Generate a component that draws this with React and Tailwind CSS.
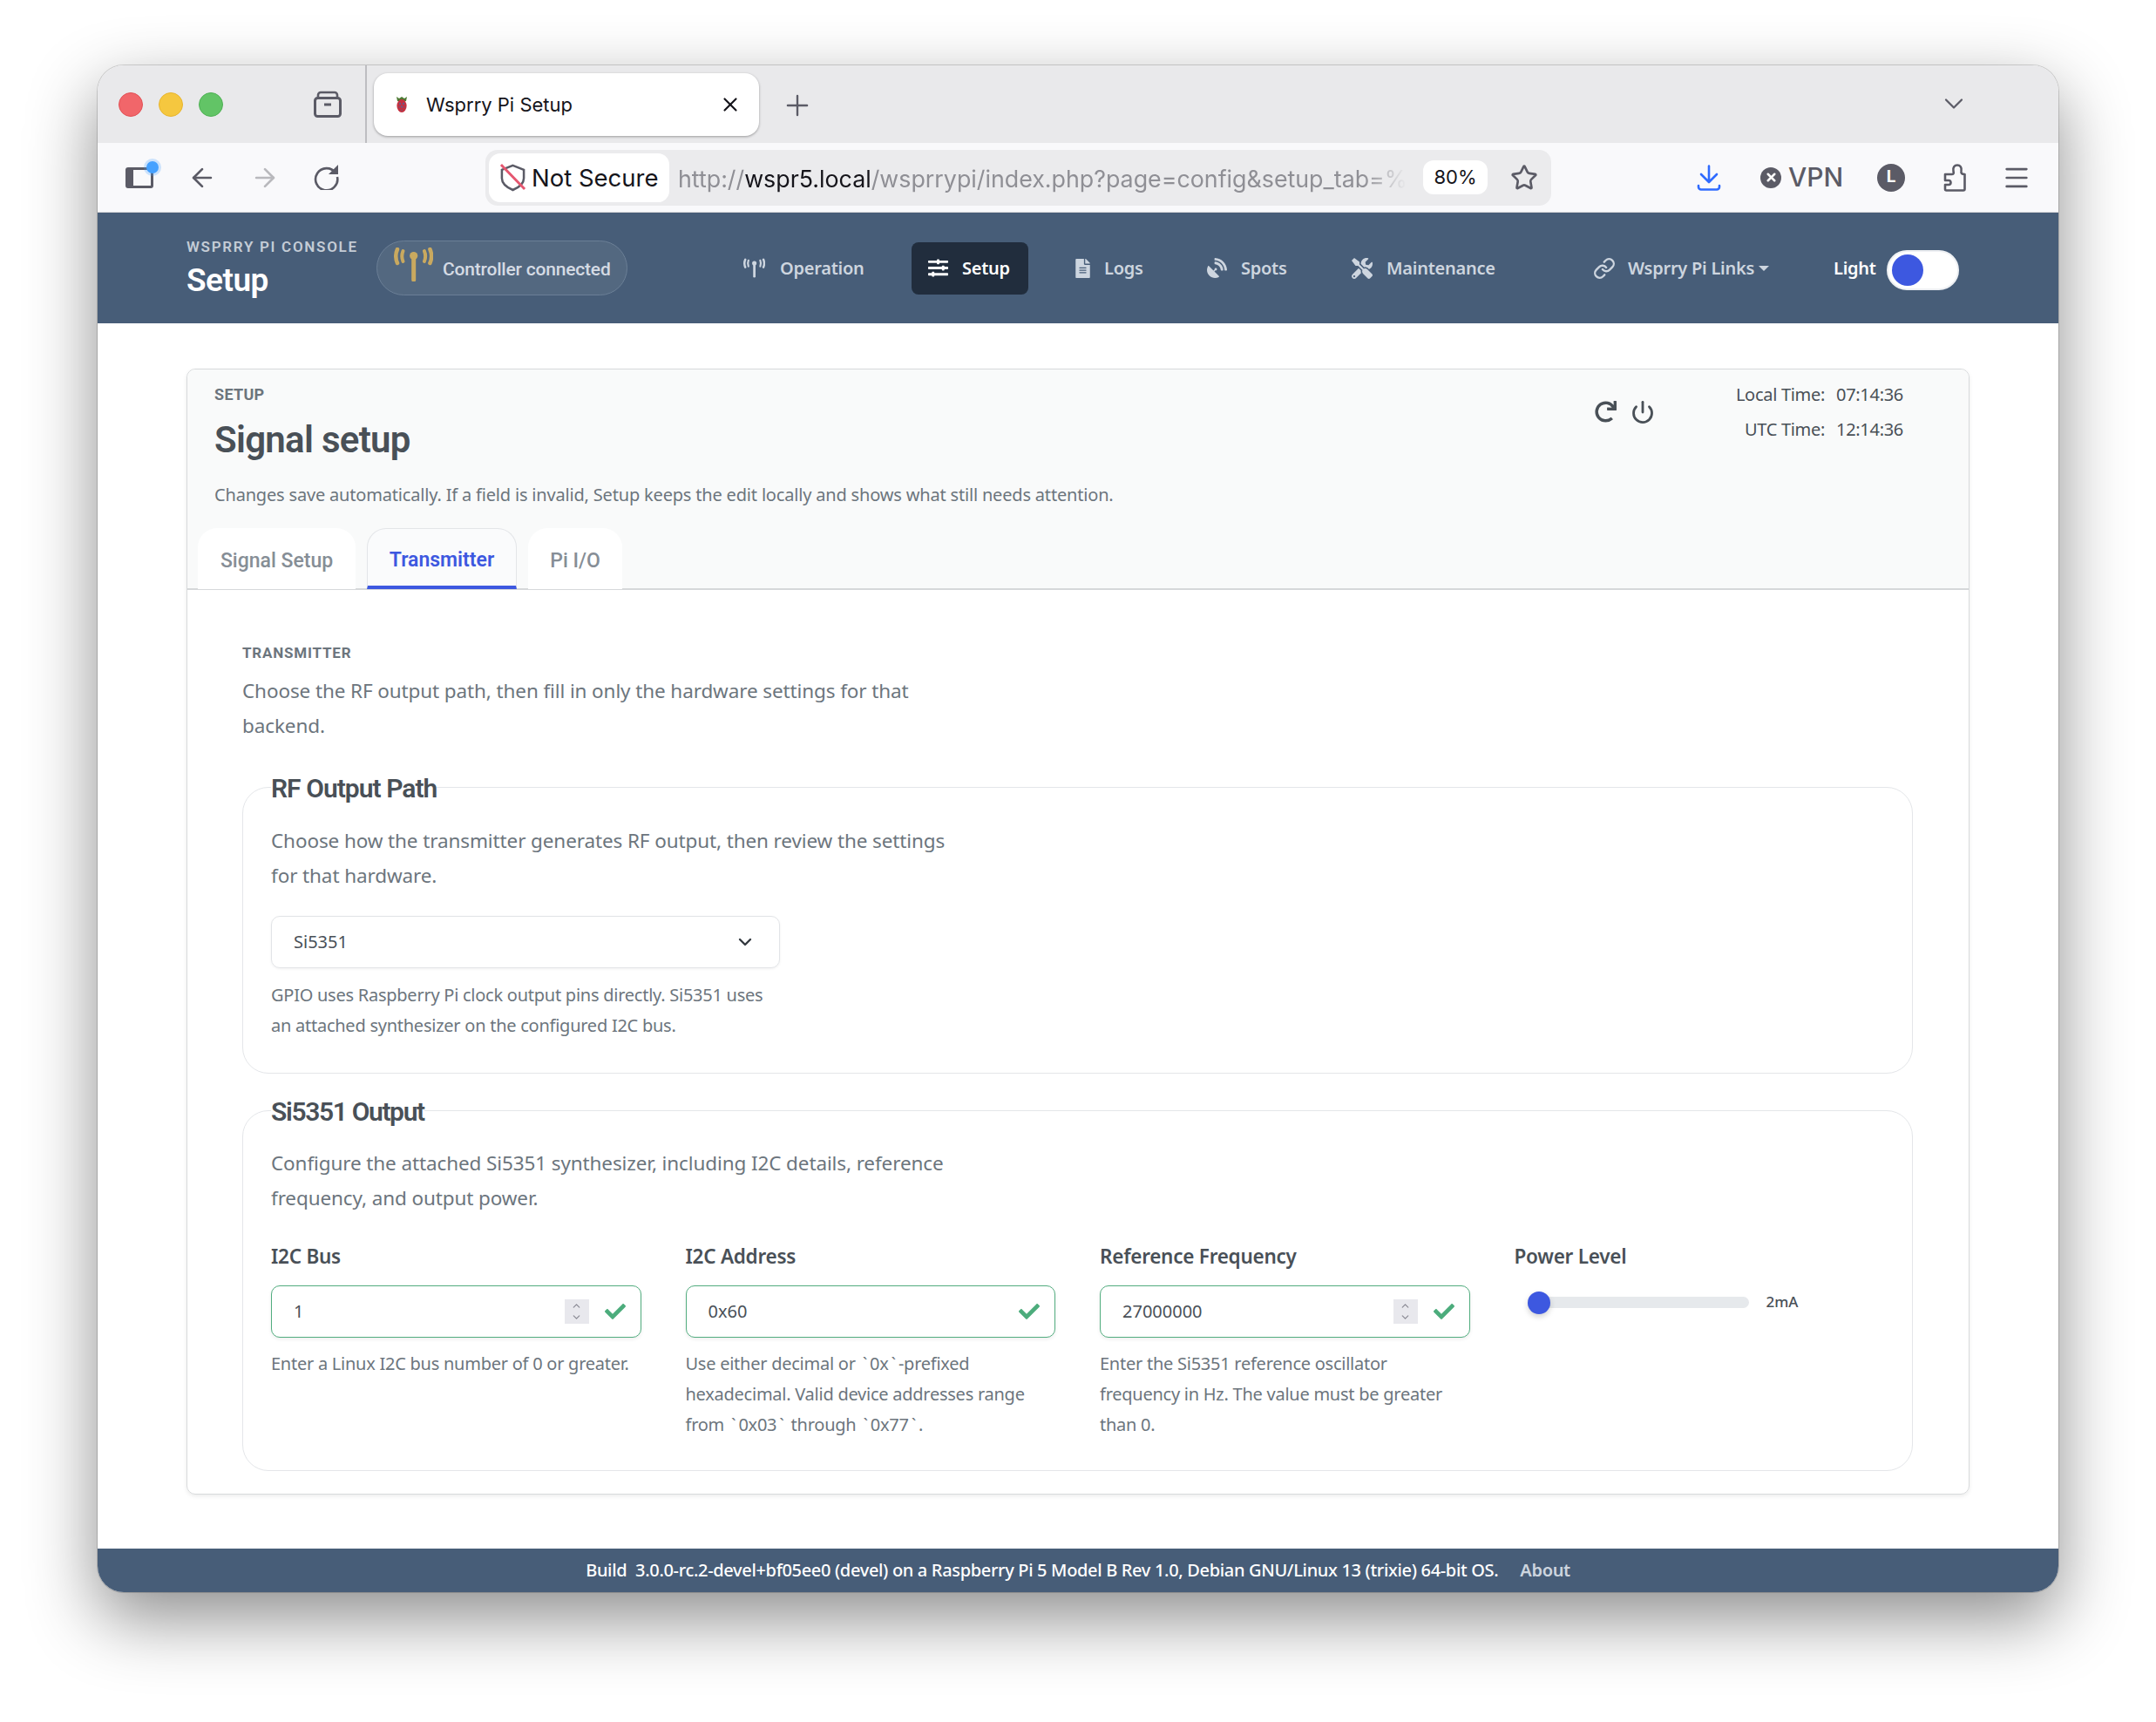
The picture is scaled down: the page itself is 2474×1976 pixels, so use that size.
import React from 'react';
import { ArrowLeft, ArrowRight, ChevronDown, ChevronUp, Link, Menu, Plus, Power, Star, X } from 'lucide-react';
import { FaCheck, FaFileAlt, FaRedo, FaSatelliteDish, FaSlidersH, FaTools } from 'react-icons/fa';

const heading = "font-['Roboto',sans-serif]";

const Antenna = ({ className }) => (
  <svg viewBox="0 0 45 39" className={className} fill="none" stroke="currentColor" strokeLinecap="round">
    <circle cx="22.7" cy="9.5" r="4.6" fill="currentColor" stroke="none" />
    <path d="M22.7 10V37" strokeWidth="5" />
    <path d="M4 2Q.5 10 4 18" strokeWidth="4.5" />
    <path d="M10.5 4Q8 10 10.5 16" strokeWidth="4" />
    <path d="M41.4 2Q44.9 10 41.4 18" strokeWidth="4.5" />
    <path d="M34.9 4Q37.4 10 34.9 16" strokeWidth="4" />
  </svg>
);

const Lights = () => (
  <div className="flex gap-[18px] ml-[24px]">
    <span className="w-[28px] h-[28px] rounded-full bg-[#f1666a] border border-[#e25055]" />
    <span className="w-[28px] h-[28px] rounded-full bg-[#f5c73f] border border-[#e8b52e]" />
    <span className="w-[28px] h-[28px] rounded-full bg-[#62c466] border border-[#4fb054]" />
  </div>
);

const Raspberry = () => (
  <svg viewBox="0 0 14 20" className="w-[14px] h-[20px]">
    <path d="M1 1l3 2 3-2 3 2 3-2-1 5H2z" fill="#4d7a33" />
    <ellipse cx="7" cy="11.5" rx="5.6" ry="7.5" fill="#c5303f" />
    <circle cx="5" cy="9" r="1.2" fill="#6d5a86" />
    <circle cx="9" cy="9" r="1.2" fill="#6d5a86" />
    <circle cx="7" cy="12.5" r="1.2" fill="#6d5a86" />
    <circle cx="4" cy="13" r="1" fill="#8d4a66" />
    <circle cx="10" cy="13" r="1" fill="#8d4a66" />
    <circle cx="7" cy="16.5" r="1" fill="#8d4a66" />
  </svg>
);

const TabStrip = () => (
  <div className="h-[89px] bg-[#e9e9eb] flex shrink-0 items-stretch">
    <div className="w-[309px] flex items-center relative">
      <Lights />
      <svg viewBox="0 0 32 32" className="w-[32px] h-[32px] ml-[104px] mt-[-2px] text-[#5b5b66]" fill="none" stroke="currentColor" strokeWidth="3">
        <rect x="1.5" y="9.5" width="29" height="21" rx="3" />
        <path d="M5 9.5V6a3 3 0 0 1 3-3h16a3 3 0 0 1 3 3v3.5" strokeWidth="2.6" />
        <path d="M12 17h8" />
      </svg>
      <span className="absolute right-0 top-0 bottom-0 w-[2px] bg-[#bdbdc1]" />
    </div>
    <div className="ml-[8px] mt-[9px] w-[442px] h-[72px] rounded-[16px] bg-white shadow-[0_1px_3px_rgba(0,0,0,0.35)] flex items-center pl-[25px] pr-[20px] font-['Inter',sans-serif]">
      <Raspberry />
      <span className="ml-[21px] text-[22px] text-[#15141a] flex-1">Wsprry Pi Setup</span>
      <X className="w-[26px] h-[26px] text-[#15141a]" strokeWidth={2} />
    </div>
    <Plus className="ml-[25px] self-center w-[38px] h-[38px] text-[#5b5b66] mt-[3px]" strokeWidth={1.5} />
    <ChevronDown className="ml-auto mr-[102px] self-center w-[36px] h-[36px] text-[#5b5b66] mt-[-2px]" strokeWidth={1.5} />
  </div>
);

const Toolbar = () => (
  <div className="h-[80px] bg-[#f9f9fb] border-b border-[#d8d8da] flex items-center shrink-0 font-['Inter',sans-serif] text-[#5b5b66]">
    <div className="relative ml-[32px] w-[32px] h-[24px] rounded-[3px] border-[3px] border-[#5b5b66] border-l-[9px]">
      <span className="absolute right-[-9px] top-[-10px] w-[14px] h-[14px] rounded-full bg-[#45a1ff] ring-[3px] ring-[#45a1ff]/25" />
    </div>
    <ArrowLeft className="ml-[39px] w-[34px] h-[34px]" strokeWidth={1.9} />
    <ArrowRight className="ml-[38px] w-[34px] h-[34px] text-[#b9b9bd]" strokeWidth={1.9} />
    <svg viewBox="0 0 30 30" className="ml-[38px] w-[30px] h-[30px] mt-[-1px]" fill="none" stroke="currentColor" strokeWidth="2.6">
      <path d="M26 10.5A12.6 12.6 0 1 0 28 15" />
      <path d="M29 1v11H18z" fill="currentColor" stroke="none" />
    </svg>
    <div className="ml-[168px] w-[1223px] h-[64px] rounded-[14px] bg-[#ebebed] flex items-center pl-[4px] pr-[12px]">
      <div className="w-[207px] h-[56px] rounded-[13px] bg-white flex items-center pl-[12px] text-[27.5px] text-[#15141a] shrink-0">
        <svg viewBox="0 0 32 34" className="w-[31px] h-[33px] mr-[6px] shrink-0" fill="none">
          <path d="M16 3L29 8v10c0 7-6 11-13 14C9 29 3 25 3 18V8z" stroke="#5b5b66" strokeWidth="2.6" />
          <path d="M2 2L30 31" stroke="#e5566f" strokeWidth="3" />
        </svg>
        <span className="mt-[2px]">Not Secure</span>
      </div>
      <div className="ml-[10px] mt-[3px] w-[836px] overflow-hidden whitespace-nowrap text-[26.8px] text-[#8f8f95] shrink-0 [mask-image:linear-gradient(to_right,black_94%,transparent)]">
        http://<span className="text-[#15141a]">wspr5.local</span>/wsprrypi/index.php?page=config&amp;setup_tab=%2
      </div>
      <span className="w-[74px] h-[39px] rounded-[12px] bg-white text-[22px] text-[#15141a] flex items-center justify-center ml-[19px] shrink-0">80%</span>
      <Star className="ml-[26px] w-[32px] h-[32px]" strokeWidth={2} />
    </div>
    <svg viewBox="0 0 28 30" className="ml-[167px] w-[28px] h-[30px] text-[#2f6bff]" fill="none" stroke="currentColor" strokeWidth="2.6" strokeLinecap="round" strokeLinejoin="round">
      <path d="M14 1.5V19M5 11l9 9 9-9M2 24v1.5a3 3 0 0 0 3 3h18a3 3 0 0 0 3-3V24" />
    </svg>
    <span className="ml-[45px] w-[24px] h-[24px] rounded-full bg-[#5b5b66] flex items-center justify-center text-white">
      <X className="w-[15px] h-[15px]" strokeWidth={4} />
    </span>
    <span className="ml-[8px] text-[30px] font-medium">VPN</span>
    <span className="ml-[39px] w-[32px] h-[32px] rounded-full bg-[#5b5b66] text-white text-[19px] font-bold flex items-center justify-center">L</span>
    <svg viewBox="0 0 26 32" className="ml-[44px] w-[26px] h-[32px]" fill="none" stroke="currentColor" strokeWidth="2.6" strokeLinejoin="round">
      <path d="M2 12H10C12 12 12 10 11.5 8.5C10.5 4 13 1.5 16 1.5C19 1.5 21.5 4 20.5 8.5C20 10.5 21 12 24.5 12V29A1.5 1.5 0 0 1 23 30.5H3.5A1.5 1.5 0 0 1 2 29V24H6A2.5 2.5 0 0 0 6 19H2z" />
    </svg>
    <Menu className="ml-[41px] w-[34px] h-[34px]" strokeWidth={1.9} />
  </div>
);

const NavItem = ({ icon, label, className }) => (
  <div className={`flex items-center shrink-0 text-[20px] font-semibold text-[#cdd5df] tracking-[-0.25px] whitespace-nowrap ${className}`}>
    {icon}
    <span>{label}</span>
  </div>
);

const AppNav = () => (
  <nav className="h-[127px] bg-[#475d78] flex items-center shrink-0 pl-[102px]">
    <div className="w-[194px] shrink-0">
      <div className={`${heading} text-[17px] font-semibold text-[#c4ccd6] tracking-[1.7px] leading-[24px] whitespace-nowrap`}>WSPRRY PI CONSOLE</div>
      <div className={`${heading} text-[37px] font-semibold text-white leading-[46px] mt-[4px] tracking-[-0.5px]`}>Setup</div>
    </div>
    <div className="ml-[24px] w-[288px] h-[63px] shrink-0 rounded-full bg-[#536880] border border-[#6b7f96] flex items-center pl-[19px]">
      <Antenna className="w-[45px] h-[39px] text-[#c9a95f] mt-[-8px]" />
      <span className={`${heading} ml-[11px] mt-[5px] text-[21px] font-medium text-[#d5dbe4] tracking-[-0.2px] whitespace-nowrap`}>Controller connected</span>
    </div>
    <NavItem className="ml-[133px] w-[193px]" icon={<Antenna className="w-[25px] h-[23px] mr-[17px]" />} label="Operation" />
    <div className="w-[134px] h-[60px] rounded-[8px] bg-[#212d3d] flex items-center shrink-0 pl-[19px] text-[20px] tracking-[-0.25px] font-semibold text-white">
      <FaSlidersH className="w-[23px] h-[23px] mr-[16px]" />
      Setup
    </div>
    <NavItem className="ml-[54px] w-[151px]" icon={<FaFileAlt className="w-[17px] h-[22px] mr-[16px]" />} label="Logs" />
    <NavItem className="w-[166px]" icon={<FaSatelliteDish className="w-[23px] h-[23px] mr-[16px]" />} label="Spots" />
    <NavItem className="w-[277px]" icon={<FaTools className="w-[24px] h-[24px] mr-[16px]" />} label="Maintenance" />
    <NavItem className="w-[190px]" icon={<Link className="w-[26px] h-[26px] mr-[14px]" strokeWidth={2.2} />} label="Wsprry Pi Links" />
    <span className="w-0 h-0 shrink-0 border-x-[6px] border-x-transparent border-t-[6px] border-t-[#cdd5df]" />
    <span className="ml-[74px] w-[61px] shrink-0 text-[20px] tracking-[-0.25px] font-semibold text-white">Light</span>
    <div className="w-[83px] h-[46px] mt-[4px] shrink-0 rounded-full bg-white border-2 border-[#eef0f3] flex items-center pl-[4px]">
      <span className="w-[36px] h-[36px] rounded-full bg-[#3d58e0]" />
    </div>
  </nav>
);

const Tab = ({ children, active, className }) => (
  <div
    className={`h-[70px] mb-[-1px] pt-[7px] rounded-t-[22px] flex items-center justify-center ${heading} text-[23px] font-medium ${className} ${
      active
        ? 'border border-[#e3e5e8] border-b-[4px] border-b-[#3d58e0] text-[#3d58e0] font-semibold bg-[#fafbfc]'
        : 'bg-white text-[#868e96]'
    }`}
  >
    {children}
  </div>
);

const CardHeader = () => (
  <div className="h-[253px] shrink-0 bg-[#f9fafa] border-b-2 border-[#d6d8da] rounded-t-[10px] flex flex-col">
    <div className="flex justify-between items-start">
      <div className="pl-[31px] pt-[17px]">
        <div className={`${heading} text-[18px] font-bold tracking-[0.3px] leading-[24px] text-[#6c757d]`}>SETUP</div>
        <div className={`${heading} text-[42px] font-semibold leading-[52px] text-[#495057] mt-[14px] tracking-[-0.7px]`}>Signal setup</div>
        <p className="text-[20px] leading-[32px] text-[#6c757d] mt-[21px] whitespace-nowrap tracking-[-0.18px]">
          Changes save automatically. If a field is invalid, Setup keeps the edit locally and shows what still needs attention.
        </p>
      </div>
      <div className="flex pt-[9px] pr-[75px]">
        <div className="flex items-start gap-[16px] pt-[27px] text-[#495057] mr-[93px]">
          <FaRedo className="w-[25px] h-[25px]" />
          <Power className="w-[28px] h-[28px] mt-[-1px]" strokeWidth={2.4} />
        </div>
        <div className="text-[20px] leading-[40px] tracking-[-0.3px] text-[#495057] grid grid-cols-[auto_auto] gap-x-[13px] justify-items-end">
          <span>Local Time:</span><span>07:14:36</span>
          <span>UTC Time:</span><span>12:14:36</span>
        </div>
      </div>
    </div>
    <div className="flex gap-[13px] pl-[12px] mt-auto">
      <Tab className="w-[181px]">Signal Setup</Tab>
      <Tab className="w-[172px]" active>Transmitter</Tab>
      <Tab className="w-[108px]">Pi I/O</Tab>
    </div>
  </div>
);

const Section = ({ title, titleClass, className, children }) => (
  <fieldset className={`border border-[#e4e6e9] rounded-[30px] px-[32px] ${className}`}>
    <legend className={`${heading} pt-[4px] text-[30px] font-semibold leading-[40px] text-[#495057] bg-white ${titleClass}`}>{title}</legend>
    {children}
  </fieldset>
);

const Copy = ({ children }) => (
  <p className="text-[22.5px] leading-[40px] tracking-[-0.11px] text-[#6c757d]">{children}</p>
);

const Help = ({ children, className = '' }) => (
  <p className={`text-[20px] leading-[35px] tracking-[-0.25px] text-[#6c757d] whitespace-nowrap ${className}`}>{children}</p>
);

const Tick = () => <span className="mx-[3px]">`</span>;

const Spinner = () => (
  <span className="w-[28px] h-[28px] bg-[#e8e8ed] flex flex-col items-center justify-center text-[#8a8a94] mr-[17px]">
    <ChevronUp className="w-[15px] h-[13px]" strokeWidth={2.2} />
    <ChevronDown className="w-[15px] h-[13px]" strokeWidth={2.2} />
  </span>
);

const ValidInput = ({ value, spinner }) => (
  <div className="h-[60px] rounded-[10px] border border-[#52ad7f] bg-white shadow-[0_2px_4px_rgba(0,0,0,0.07)] flex items-center pl-[25px] pr-[16px] text-[20px] text-[#495057]">
    <span className="flex-1">{value}</span>
    {spinner && <Spinner />}
    <FaCheck className="w-[26px] h-[24px] text-[#4cac7c]" />
  </div>
);

const Field = ({ label, children }) => (
  <div className="min-w-0">
    <div className="text-[22.5px] font-semibold leading-[30px] tracking-[-0.25px] text-[#495057] mb-[18px]">{label}</div>
    {children}
  </div>
);

const Slider = () => (
  <div className="h-[38px] pl-[15px] flex items-center">
    <div className="relative w-[254px] h-[13px] rounded-full bg-[#e6e9ec]">
      <span className="absolute left-0 top-[-6px] w-[26px] h-[26px] rounded-full bg-[#3d58e0] shadow-[0_3px_6px_rgba(0,0,0,0.18)]" />
    </div>
    <span className="ml-[20px] text-[17px] font-medium text-[#495057]">2mA</span>
  </div>
);

const Transmitter = () => (
  <div className="pt-[60px] pl-[63px] pr-[64px] pb-[26px]">
    <div className={`${heading} text-[17px] font-bold tracking-[0.8px] leading-[24px] text-[#6c757d]`}>TRANSMITTER</div>
    <div className="mt-[12px]">
      <Copy>Choose the RF output path, then fill in only the hardware settings for that<br />backend.</Copy>
    </div>
    <Section title="RF Output Path" titleClass="tracking-[-0.95px]" className="mt-[28px] pb-[37px]">
      <div className="pt-[20px]">
        <Copy>Choose how the transmitter generates RF output, then review the settings<br />for that hardware.</Copy>
      </div>
      <div className="mt-[26px] w-[584px] h-[60px] rounded-[10px] border border-[#e2e4e7] shadow-[0_1px_3px_rgba(0,0,0,0.06)] flex items-center justify-between pl-[25px] pr-[27px] text-[20px] text-[#495057]">
        <span>Si5351</span>
        <ChevronDown className="w-[24px] h-[24px] text-[#343a40]" strokeWidth={2.4} />
      </div>
      <div className="mt-[13px]">
        <Help>GPIO uses Raspberry Pi clock output pins directly. Si5351 uses<br />an attached synthesizer on the configured I2C bus.</Help>
      </div>
    </Section>
    <Section title="Si5351 Output" titleClass="tracking-[-1.35px]" className="mt-[20px] pb-[35px]">
      <div className="pt-[19px]">
        <Copy>Configure the attached Si5351 synthesizer, including I2C details, reference<br />frequency, and output power.</Copy>
      </div>
      <div className="mt-[32px] grid grid-cols-4 gap-x-[51px]">
        <Field label="I2C Bus">
          <ValidInput value="1" spinner />
          <Help className="mt-[12px]">Enter a Linux I2C bus number of 0 or greater.</Help>
        </Field>
        <Field label="I2C Address">
          <ValidInput value="0x60" />
          <Help className="mt-[12px]">Use either decimal or <Tick />0x<Tick />-prefixed<br />hexadecimal. Valid device addresses range<br />from <Tick />0x03<Tick /> through <Tick />0x77<Tick />.</Help>
        </Field>
        <Field label="Reference Frequency">
          <ValidInput value="27000000" spinner />
          <Help className="mt-[12px]">Enter the Si5351 reference oscillator<br />frequency in Hz. The value must be greater<br />than 0.</Help>
        </Field>
        <Field label="Power Level">
          <Slider />
        </Field>
      </div>
    </Section>
  </div>
);

const Footer = () => (
  <footer className="h-[50px] shrink-0 bg-[#475d78] flex items-center justify-center text-[20px] tracking-[-0.33px] font-medium text-white">
    <span className="whitespace-pre">Build  3.0.0-rc.2-devel+bf05ee0 (devel) on a Raspberry Pi 5 Model B Rev 1.0, Debian GNU/Linux 13 (trixie) 64-bit OS.</span>
    <span className="ml-[25px] font-semibold text-[#cdd5df]">About</span>
  </footer>
);

export default function App() {
  return (
    <div className="w-[2474px] h-[1976px] bg-white pt-[75px] pl-[112px] font-['Noto_Sans',sans-serif] overflow-hidden">
      <div className="w-[2250px] h-[1752px] rounded-[30px] overflow-hidden bg-white flex flex-col shadow-[0_30px_80px_rgba(0,0,0,0.45),0_0_0_1px_rgba(0,0,0,0.15)]">
        <TabStrip />
        <Toolbar />
        <AppNav />
        <main className="flex-1 pt-[52px] px-[102px] bg-white">
          <div className="rounded-[10px] border border-[#d8dadc] shadow-[0_2px_5px_rgba(0,0,0,0.08)]">
            <CardHeader />
            <Transmitter />
          </div>
        </main>
        <Footer />
      </div>
    </div>
  );
}
